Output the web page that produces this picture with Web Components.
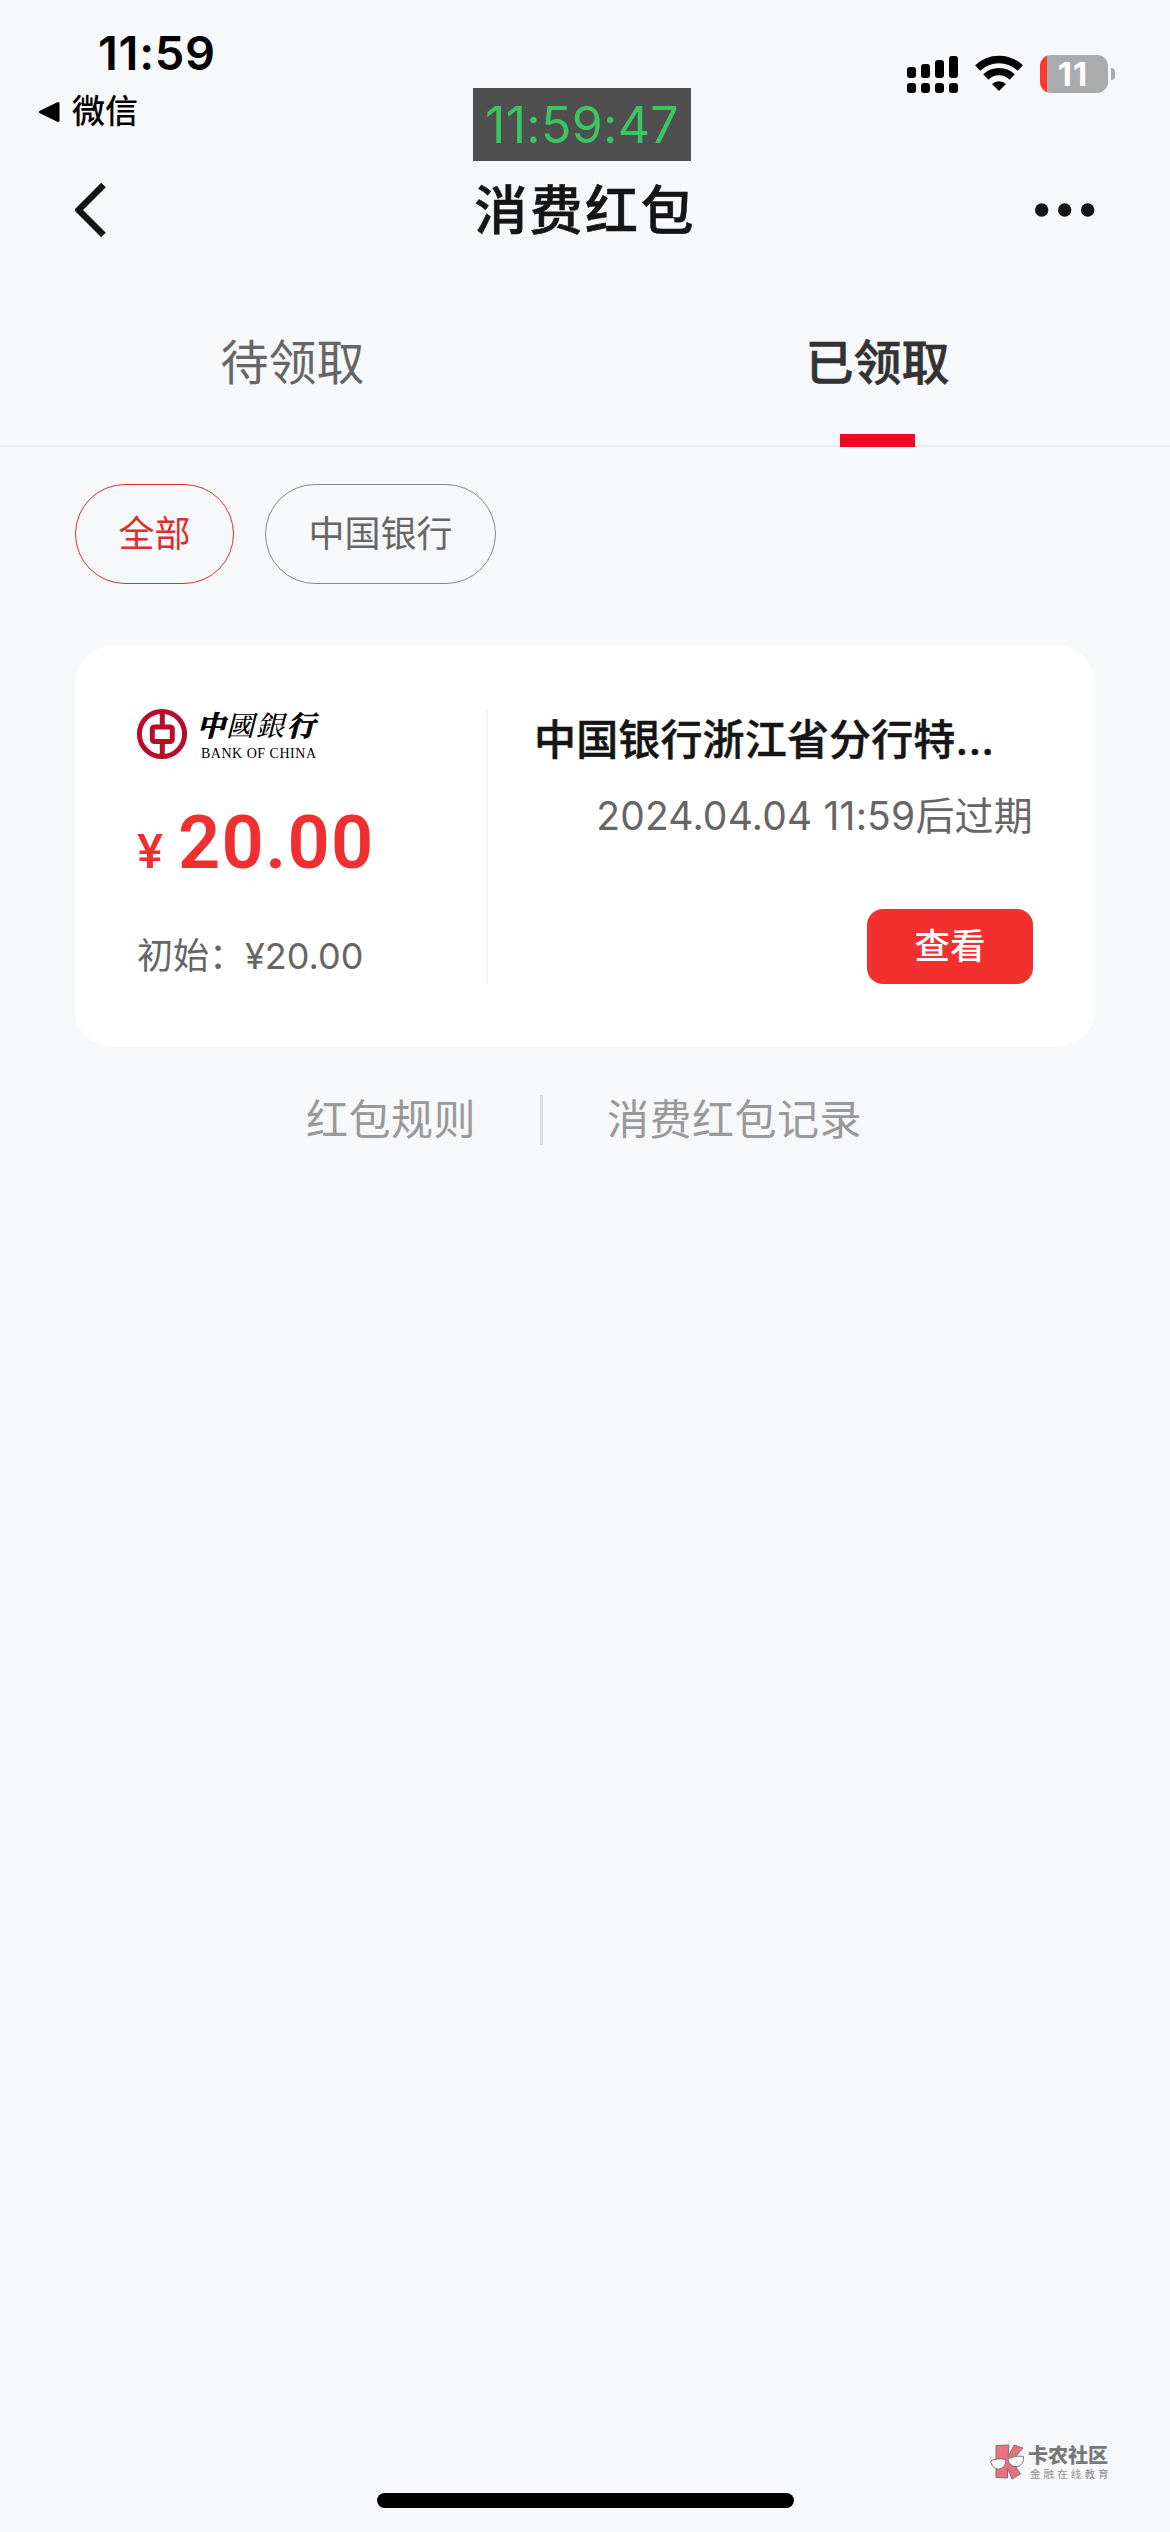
<!DOCTYPE html>
<html lang="zh-CN">
<head>
<meta charset="UTF-8">
<title>消费红包</title>
<style>
  html, body {
    margin: 0;
    padding: 0;
  }

  body {
    background: #f7f8fa;
    font-family: Inter, "Noto Sans CJK SC", sans-serif;
    color: #151515;
  }
</style>
</head>
<body>
<packet-page>
  <status-bar slot="status" time="11:59" back-app="微信" battery="11"></status-bar>
  <clock-overlay slot="overlay">11:59:47</clock-overlay>
  <nav-header slot="header">消费红包</nav-header>
  <tab-bar slot="tabs">
    <tab-item>待领取</tab-item>
    <tab-item active>已领取</tab-item>
  </tab-bar>
  <filter-chips>
    <filter-chip active>全部</filter-chip>
    <filter-chip>中国银行</filter-chip>
  </filter-chips>
  <packet-card amount="20.00" initial="¥20.00">
    <bank-logo slot="logo"></bank-logo>
    <span slot="title">中国银行浙江省分行特...</span>
    <span slot="expiry">2024.04.04 11:59后过期</span>
    <action-button slot="action">查看</action-button>
  </packet-card>
  <footer-links>
    <span>红包规则</span>
    <span slot="second">消费红包记录</span>
  </footer-links>
  <site-watermark slot="bottom"></site-watermark>
  <home-indicator slot="bottom"></home-indicator>
</packet-page>

<script>
// Base class, puts the markup of a component in its shadow root
class BaseElement extends HTMLElement {
  constructor() {
    super();
    this.attachShadow({ mode: 'open' });
  }

  connectedCallback() {
    this.shadowRoot.innerHTML = this.template();
  }
}

// Page shell
class PacketPage extends BaseElement {
  template() {
    return `
      <style>
        :host {
          display: flex;
          flex-direction: column;
          position: relative;
          width: 1170px;
          height: 2532px;
          overflow: hidden;
          background: #f7f8fa;
        }
        main {
          flex: 1;
          display: flex;
          flex-direction: column;
          padding: 37px 75px 0;
        }
      </style>
      <slot name="status"></slot>
      <slot name="overlay"></slot>
      <slot name="header"></slot>
      <slot name="tabs"></slot>
      <main><slot></slot></main>
      <slot name="bottom"></slot>
    `;
  }
}

// Phone status bar
class StatusBar extends BaseElement {
  template() {
    return `
      <style>
        :host {
          display: flex;
          justify-content: space-between;
          height: 147px;
          box-sizing: border-box;
          padding: 23px 55px 0 38px;
          color: #000;
        }
        .time {
          padding-left: 60px;
          font-size: 47px;
          font-weight: 600;
          line-height: 60px;
          letter-spacing: 0.7px;
        }
        .back {
          display: flex;
          align-items: center;
          gap: 12px;
          height: 57px;
          font-size: 33px;
          font-weight: 500;
        }
        .back span {
          line-height: 48px;
          margin-bottom: 2px;
        }
        .icons {
          display: flex;
          align-items: center;
          height: 38px;
          margin-top: 32px;
        }
        .wifi {
          margin-left: 17px;
        }
        .battery {
          display: flex;
          align-items: center;
          gap: 3px;
          margin-left: 17px;
        }
        .level {
          width: 68px;
          height: 38px;
          border-radius: 11px;
          background: linear-gradient(to right, #fb3b30 7px, #a9abac 7px);
          color: #fff;
          font-size: 33px;
          font-weight: 700;
          line-height: 38px;
          letter-spacing: 1px;
          text-align: center;
          text-indent: -2px;
        }
        .nub {
          width: 4px;
          height: 12px;
          border-radius: 0 5px 5px 0;
          background: #a9abac;
        }
        svg {
          display: block;
        }
      </style>
      <div>
        <div class="time">${this.getAttribute('time')}</div>
        <div class="back">
          <svg width="22" height="22" viewBox="0 0 22 22">
            <path d="M2.5 11 L20 2.5 V19.5 Z" stroke="#000" stroke-width="3" stroke-linejoin="round"/>
          </svg>
          <span>${this.getAttribute('back-app')}</span>
        </div>
      </div>
      <div class="icons">
        <svg width="51" height="38" viewBox="0 0 51 38">
          <rect x="0" y="12" width="9" height="11" rx="3"/>
          <rect x="14" y="9" width="9" height="14" rx="3"/>
          <rect x="28" y="5" width="9" height="18" rx="3"/>
          <rect x="42" y="1" width="9" height="22" rx="3"/>
          <rect x="0" y="28" width="9" height="10" rx="3"/>
          <rect x="14" y="28" width="9" height="10" rx="3"/>
          <rect x="28" y="28" width="9" height="10" rx="3"/>
          <rect x="42" y="28" width="9" height="10" rx="3"/>
        </svg>
        <svg class="wifi" width="48" height="38" viewBox="0 0 48 38">
          <g fill="none" stroke="#000" stroke-width="7.4">
            <path d="M2.6 13 A31 31 0 0 1 45.4 13"/>
            <path d="M10.8 22 A19 19 0 0 1 37.2 22"/>
          </g>
          <path d="M24 36 L17 29 A10 10 0 0 1 31 29 Z"/>
        </svg>
        <div class="battery">
          <div class="level">${this.getAttribute('battery')}</div>
          <div class="nub"></div>
        </div>
      </div>
    `;
  }
}

// Floating clock that lies over the status bar
class ClockOverlay extends BaseElement {
  template() {
    return `
      <style>
        :host {
          position: absolute;
          left: 473px;
          top: 88px;
          width: 218px;
          height: 73px;
          background: #4f4f4f;
          color: #3cc661;
          font-size: 50px;
          line-height: 74px;
          letter-spacing: 0.3px;
          text-align: center;
          white-space: nowrap;
        }
      </style>
      <slot></slot>
    `;
  }
}

// Title row with back and more buttons
class NavHeader extends BaseElement {
  template() {
    return `
      <style>
        :host {
          display: grid;
          grid-template-columns: 1fr auto 1fr;
          align-items: center;
          height: 126px;
          padding: 0 75px;
        }
        .title {
          padding-bottom: 6px;
          font-size: 53px;
          font-weight: 500;
          letter-spacing: 2.4px;
          -webkit-text-stroke: 0.6px #151515;
        }
        .more {
          justify-self: end;
        }
        svg {
          display: block;
        }
      </style>
      <svg width="34" height="56" viewBox="0 0 34 56">
        <path d="M28.5 3 L3.5 28 L28.5 53" fill="none" stroke="#151515" stroke-width="6.5"/>
      </svg>
      <div class="title"><slot></slot></div>
      <svg class="more" width="60" height="14" viewBox="0 0 60 14" fill="#151515">
        <circle cx="6.7" cy="7" r="6.7"/>
        <circle cx="29.7" cy="7" r="6.7"/>
        <circle cx="52.7" cy="7" r="6.7"/>
      </svg>
    `;
  }
}

class TabBar extends BaseElement {
  template() {
    return `
      <style>
        :host {
          display: flex;
          height: 172px;
          border-bottom: 2px solid #ebecee;
        }
      </style>
      <slot></slot>
    `;
  }
}

class TabItem extends BaseElement {
  template() {
    return `
      <style>
        :host {
          flex: 1;
          display: flex;
          flex-direction: column;
          align-items: center;
          justify-content: space-between;
          height: 174px;
          font-size: 48px;
          color: #666;
        }
        :host([active]) {
          color: #333;
          font-weight: 500;
          -webkit-text-stroke: 0.6px #333;
        }
        .label {
          padding-top: 54px;
          line-height: 72px;
        }
        .bar {
          width: 75px;
          height: 13px;
        }
        :host([active]) .bar {
          background: #ee0a24;
        }
      </style>
      <div class="label"><slot></slot></div>
      <div class="bar"></div>
    `;
  }
}

class FilterChips extends BaseElement {
  template() {
    return `
      <style>
        :host {
          display: flex;
          gap: 31px;
        }
      </style>
      <slot></slot>
    `;
  }
}

class FilterChip extends BaseElement {
  template() {
    return `
      <style>
        :host {
          box-sizing: border-box;
          height: 100px;
          padding: 0 42.5px;
          border: 1.5px solid #888;
          border-radius: 50px;
          color: #666;
          font-size: 36px;
          line-height: 99px;
        }
        :host([active]) {
          border-color: #d9302c;
          color: #d9302c;
        }
      </style>
      <slot></slot>
    `;
  }
}

// White card of one red packet
class PacketCard extends BaseElement {
  template() {
    return `
      <style>
        :host {
          display: flex;
          box-sizing: border-box;
          height: 401px;
          margin-top: 62px;
          padding: 63px 62px 63px;
          border-radius: 38px;
          background: #fff;
        }
        .left {
          width: 351px;
          display: flex;
          flex-direction: column;
          border-right: 2px solid #f6f6f7;
          box-sizing: border-box;
        }
        .amount {
          display: flex;
          align-items: baseline;
          gap: 15px;
          margin-top: 39px;
          color: #f03030;
          font-family: Roboto, Inter, sans-serif;
          line-height: 90px;
        }
        .sign {
          font-size: 49px;
          font-weight: 500;
        }
        .value {
          font-size: 74px;
          font-weight: 600;
          letter-spacing: 1.3px;
        }
        .initial {
          margin-top: 32px;
          color: #666;
          font-size: 36px;
          line-height: 54px;
          white-space: nowrap;
        }
        .right {
          flex: 1;
          display: flex;
          flex-direction: column;
          align-items: flex-end;
        }
        .title {
          align-self: flex-start;
          padding: 1px 0 0 46px;
          font-size: 42px;
          font-weight: 500;
          line-height: 60px;
          letter-spacing: 0.15px;
          white-space: nowrap;
          -webkit-text-stroke: 0.5px #151515;
        }
        .expiry {
          flex: 1;
          padding-top: 16px;
          color: #666;
          font-size: 39px;
          line-height: 60px;
          letter-spacing: 0.2px;
          white-space: nowrap;
        }
      </style>
      <div class="left">
        <slot name="logo"></slot>
        <div class="amount">
          <span class="sign">¥</span>
          <span class="value">${this.getAttribute('amount')}</span>
        </div>
        <div class="initial">初始：${this.getAttribute('initial')}</div>
      </div>
      <div class="right">
        <div class="title"><slot name="title"></slot></div>
        <div class="expiry"><slot name="expiry"></slot></div>
        <slot name="action"></slot>
      </div>
    `;
  }
}

class BankLogo extends BaseElement {
  template() {
    return `
      <style>
        :host {
          display: block;
          height: 50px;
        }
        svg {
          display: block;
          overflow: visible;
        }
        .name {
          font-family: "Noto Serif CJK TC", "Noto Sans CJK TC", serif;
          font-size: 28px;
          font-weight: 500;
          font-style: italic;
        }
        .heavy {
          font-weight: 700;
          stroke: #000;
          stroke-width: 0.8px;
        }
        .latin {
          font-family: "Liberation Serif", serif;
          font-size: 14px;
        }
      </style>
      <svg width="190" height="52" viewBox="0 0 190 52">
        <g fill="none" stroke="#b80d2a" stroke-width="5">
          <circle cx="25" cy="25" r="22.6"/>
          <rect x="15.3" y="18" width="20" height="14.5" rx="2"/>
          <path d="M25.3 3 V17 M25.3 33 V48"/>
        </g>
        <text class="name" y="27"><tspan class="heavy" x="60">中</tspan><tspan x="89">國</tspan><tspan x="119">銀</tspan><tspan class="heavy" x="150">行</tspan></text>
        <text class="latin" x="64" y="49" textLength="115">BANK OF CHINA</text>
      </svg>
    `;
  }
}

class ActionButton extends BaseElement {
  template() {
    return `
      <style>
        :host {
          width: 166px;
          height: 75px;
          border-radius: 16px;
          background: #f33030;
          color: #fff;
          font-size: 35.5px;
          font-weight: 500;
          line-height: 75px;
          text-align: center;
        }
      </style>
      <slot></slot>
    `;
  }
}

class FooterLinks extends BaseElement {
  template() {
    return `
      <style>
        :host {
          display: flex;
          justify-content: center;
          align-items: center;
          gap: 64px;
          height: 50px;
          margin-top: 48px;
          padding-right: 2px;
          color: #999;
          font-size: 42px;
          line-height: 50px;
          letter-spacing: 0.5px;
        }
        ::slotted(span) {
          margin-bottom: 1px;
        }
        i {
          width: 3px;
          height: 50px;
          background: #ddd;
        }
      </style>
      <slot></slot>
      <i></i>
      <slot name="second"></slot>
    `;
  }
}

// Community mark in the bottom corner
class SiteWatermark extends BaseElement {
  template() {
    return `
      <style>
        :host {
          display: flex;
          justify-content: flex-end;
          gap: 3px;
          height: 49px;
          padding-right: 62px;
          color: #77787a;
        }
        .name {
          font-size: 20px;
          font-weight: 900;
          line-height: 25px;
        }
        .sub {
          font-size: 10.5px;
          line-height: 12px;
          letter-spacing: 3.1px;
          padding-left: 2px;
          margin-right: -4px;
          color: #8e8f91;
        }
      </style>
      <svg width="35" height="36" viewBox="0 0 35 36">
        <g fill="#e8717d" stroke="#777" stroke-width="1">
          <path d="M6 1.5 L19 1 L18 13 L24 1 L33 4 L22 17 L30.5 30 L22 35 L17.5 24 L17.5 34 L6 33.5 Z"/>
        </g>
        <g fill="#f7f8fa" stroke="#777" stroke-width="1">
          <path d="M0.6 17 C4 14.5 12 14.5 15.5 15.5 C16 21 13 25 8.5 25 C4 25 1.5 21.5 0.6 17 Z"/>
          <path d="M18 15 C22 12.5 29 11.5 33.5 12.5 C34 18 31.5 22 27 22.5 C22 23 19 20 18 15 Z"/>
        </g>
      </svg>
      <div>
        <div class="name">卡农社区</div>
        <div class="sub">金融在线教育</div>
      </div>
    `;
  }
}

class HomeIndicator extends BaseElement {
  template() {
    return `
      <style>
        :host {
          align-self: center;
          width: 417px;
          height: 15px;
          margin-bottom: 24px;
          border-radius: 8px;
          background: #000;
        }
      </style>
    `;
  }
}

// Register custom elements
customElements.define('packet-page', PacketPage);
customElements.define('status-bar', StatusBar);
customElements.define('clock-overlay', ClockOverlay);
customElements.define('nav-header', NavHeader);
customElements.define('tab-bar', TabBar);
customElements.define('tab-item', TabItem);
customElements.define('filter-chips', FilterChips);
customElements.define('filter-chip', FilterChip);
customElements.define('packet-card', PacketCard);
customElements.define('bank-logo', BankLogo);
customElements.define('action-button', ActionButton);
customElements.define('footer-links', FooterLinks);
customElements.define('site-watermark', SiteWatermark);
customElements.define('home-indicator', HomeIndicator);
</script>
</body>
</html>
